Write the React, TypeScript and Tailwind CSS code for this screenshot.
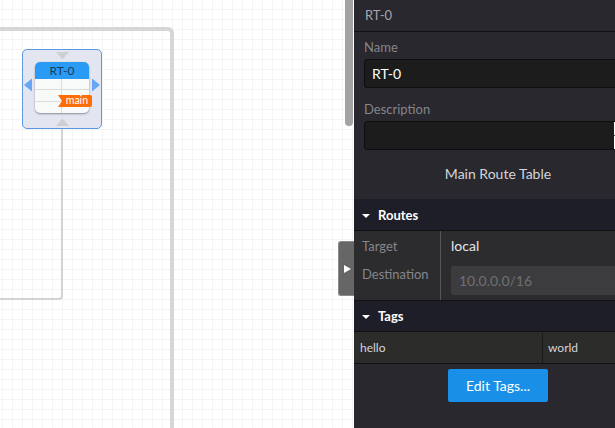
function RouteTableNode() {
  return (
    <div className="absolute left-[22px] top-[49px] h-[80px] w-[80px] rounded-[5px] border border-[#5b97e2] bg-[#e3e5f1]">
      <svg className="absolute left-0 top-0" width="78" height="78" viewBox="0 0 78 78">
        <polygon points="33,2 46,2 39.5,9.5" fill="#cfcfd2" />
        <polygon points="33,76 46,76 39.5,68.5" fill="#cfcfd2" />
        <polygon points="1,35 9,28.5 9,41.5" fill="#66a6f5" />
        <polygon points="77,35 69,28.5 69,41.5" fill="#66a6f5" />
      </svg>
      <div className="absolute left-[12px] top-[12px] flex h-[51px] w-[54px] flex-col overflow-hidden rounded-[5px] bg-[#f8f9f9] shadow-[0_1px_2px_#8a8d9a]">
        <div className="flex h-[17px] shrink-0 items-center justify-center bg-[#2a9bf4] pt-[1px] text-[12px] text-[#1e3a56]">
          RT-0
        </div>
        <div className="grid flex-1 grid-cols-2 grid-rows-3">
          <div className="border-b border-r border-[#dcdedd]" />
          <div className="border-b border-[#dcdedd]" />
          <div className="border-b border-r border-[#dcdedd]" />
          <div className="border-b border-[#dcdedd]" />
          <div className="border-r border-[#dcdedd]" />
          <div />
        </div>
      </div>
      <div className="absolute left-[35px] top-[45px] flex h-[12px] w-[34px] items-center justify-end rounded-r-[2px] bg-[#ff6d05] pb-[1px] pr-[4px] text-[10.5px] leading-none text-white [clip-path:polygon(0_0,100%_0,100%_100%,0_100%,4px_50%)]">
        main
      </div>
    </div>
  );
}

function Canvas() {
  return (
    <div className="relative h-full w-[354px] shrink-0 overflow-hidden bg-white bg-[linear-gradient(to_right,#f4f4f5_1px,transparent_1px),linear-gradient(to_bottom,#f4f4f5_1px,transparent_1px)] bg-[size:10px_10px] bg-[position:2px_9px]">
      {/* vpc outline */}
      <div className="absolute left-[-40px] top-[27px] h-[500px] w-[214px] rounded-[6px] border-[4px] border-[#d6d6d6]" />
      {/* subnet outline */}
      <div className="absolute left-[-40px] top-[100px] h-[200px] w-[103px] rounded-br-[4px] border-b-2 border-r-2 border-[#d3d3d3]" />
      <RouteTableNode />
      {/* scrollbar */}
      <div className="absolute left-[345px] top-[-6px] h-[132px] w-[8px] rounded-[4px] bg-[#a3a3a3]" />
      {/* collapse handle */}
      <div className="absolute left-[338px] top-[241px] flex h-[55px] w-[16px] items-center rounded-l-[3px] border border-r-0 border-[#8a8a8a] bg-[#666666] pl-[5px]">
        <svg width="7" height="8" viewBox="0 0 7 8">
          <polygon points="0,0 7,4 0,8" fill="#ffffff" />
        </svg>
      </div>
    </div>
  );
}

function SectionHeader({ title, className }: { title: string; className: string }) {
  return (
    <div className={`flex ${className} shrink-0 items-center gap-[8px] border-b border-[#111114] bg-[#1e1e28] pl-[8px] text-[13px] font-bold text-white`}>
      <svg width="8" height="4" viewBox="0 0 8 4">
        <polygon points="0,0 8,0 4,4" fill="#ffffff" />
      </svg>
      {title}
    </div>
  );
}

function Panel() {
  return (
    <div className="flex h-full min-w-0 flex-1 flex-col overflow-hidden bg-[#28282e]">
      <div className="flex h-[32px] shrink-0 items-center border-b border-[#111114] pl-[11px] text-[13px] text-[#a5a5ab]">
        RT-0
      </div>
      <div className="pl-[10px] pt-[6px]">
        <div className="h-[21px] text-[13px] leading-[18px] text-[#85858a]">Name</div>
        <div className="flex h-[29px] w-[300px] items-center rounded-[3px] border border-[#0e0e0e] bg-[#1c1c1c] pl-[7px] text-[14px] text-white">
          RT-0
        </div>
        <div className="mt-[12px] h-[21px] text-[13px] leading-[18px] text-[#85858a]">Description</div>
        <div className="relative h-[29px] w-[300px] rounded-[3px] border border-[#0e0e0e] bg-[#1c1c1c]">
          {/* resize grip peeking in at the window edge */}
          <div className="absolute left-[249px] top-0 h-full w-[1px] bg-white" />
          <div className="absolute left-[249px] top-[13px] h-[1px] w-[1px] bg-[#555555]" />
        </div>
      </div>
      <div className="flex h-[49px] shrink-0 items-center justify-center pb-[3px] pl-[27px] text-[14px] text-[#d5d5da]">
        Main Route Table
      </div>
      <SectionHeader title="Routes" className="h-[32px] pt-[2px]" />
      <div className="flex h-[70px] shrink-0 border-b border-[#111114] bg-[#2c2c2e]">
        <div className="flex w-[87px] shrink-0 flex-col border-r border-[#55555a] pl-[8px] pt-[5px] text-[13px] leading-[20px] text-[#85858a]">
          <div className="h-[28px]">Target</div>
          <div>Destination</div>
        </div>
        <div className="pl-[10px] pt-[5px]">
          <div className="h-[30px] text-[14px] leading-[20px] text-[#e6e6ea]">local</div>
          <div className="flex h-[29px] w-[200px] items-center rounded-[3px] bg-[#3c3c3e] pl-[8px] text-[14px] text-[#6f6f73]">
            10.0.0.0/16
          </div>
        </div>
      </div>
      <SectionHeader title="Tags" className="h-[31px] pt-[1px]" />
      <div className="flex h-[32px] shrink-0 border-b border-[#111114] bg-[#2c2c2a] pt-[1px] text-[12px] text-[#d5d5da]">
        <div className="flex w-[189px] shrink-0 items-center border-r border-[#18181a] pl-[6px]">hello</div>
        <div className="flex items-center pl-[5px]">world</div>
      </div>
      <div className="flex justify-center pl-[27px] pt-[5px]">
        <button className="h-[33px] w-[100px] rounded-[2px] bg-[#1a8fe8] pb-[1px] text-[14px] text-white">Edit Tags...</button>
      </div>
    </div>
  );
}

export default function App() {
  return (
    <div className="flex h-[428px] w-[615px] overflow-hidden font-['Lato',sans-serif]">
      <Canvas />
      <Panel />
    </div>
  );
}
